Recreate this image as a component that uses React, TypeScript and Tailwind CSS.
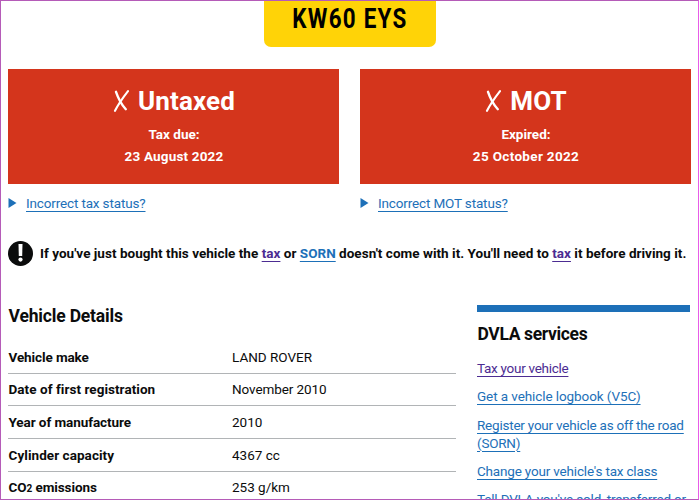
import type { ReactNode } from "react";

const details = [
  { label: "Vehicle make", value: "LAND ROVER", labelClass: "tracking-[-0.1px]", valueClass: "" },
  { label: "Date of first registration", value: "November 2010", labelClass: "tracking-[0.05px]", valueClass: "tracking-[-0.1px]" },
  { label: "Year of manufacture", value: "2010", labelClass: "tracking-[-0.08px]", valueClass: "" },
  { label: "Cylinder capacity", value: "4367 cc", labelClass: "tracking-[0.06px]", valueClass: "" },
  {
    // small figure sits on the baseline
    label: <>CO<span className="text-[10px]">2</span> emissions</>,
    value: "253 g/km",
    labelClass: "tracking-[-0.08px]",
    valueClass: "",
  },
];

const services = [
  { text: "Tax your vehicle", className: "text-[#4c2c92] tracking-[-0.28px]" },
  { text: "Get a vehicle logbook (V5C)", className: "text-[#1d70b8] tracking-[-0.09px]" },
  { text: "Register your vehicle as off the road (SORN)", className: "text-[#1d70b8] tracking-[-0.22px]" },
  { text: "Change your vehicle's tax class", className: "text-[#1d70b8] tracking-[-0.18px]" },
  { text: "Tell DVLA you've sold, transferred or bought a vehicle", className: "text-[#1d70b8] tracking-[-0.17px]" },
];

function Cross() {
  return (
    <svg width="16" height="22" viewBox="0 0 16 22" fill="none" stroke="#fff" strokeLinecap="round">
      <path d="M3 1.8 C4.6 6.5 8.5 14.5 12.8 19.2" strokeWidth="2.4" />
      <path d="M15 1.2 C10.5 7 5.5 14 2 20.8" strokeWidth="2.1" />
    </svg>
  );
}

type StatusProps = { title: ReactNode; label: string; date: ReactNode; link: string };

function StatusPanel({ title, label, date, link }: StatusProps) {
  return (
    <section className="w-[331px]">
      <div className="flex h-[115px] flex-col items-center bg-[#d4351c] pt-4 pl-px font-bold text-white">
        <h2 className="flex h-8 items-center gap-[9px] text-[26px] leading-8 tracking-[0.1px]">
          <Cross />
          {title}
        </h2>
        <p className="mt-[7px] text-center text-[13.5px] leading-[21.5px]">
          {label}
          <br />
          {date}
        </p>
      </div>
      <a className="mt-[10px] flex h-[18px] items-center text-[13.5px] leading-[18px] tracking-[-0.15px] text-[#1d70b8]">
        <svg width="9" height="10" viewBox="0 0 9 10" className="mr-[9px]">
          <path d="M0.5 0 L8.5 5 L0.5 10 Z" fill="#1d70b8" />
        </svg>
        <span className="underline decoration-1 underline-offset-[3px]">{link}</span>
      </a>
    </section>
  );
}

export default function App() {
  return (
    <div className="h-[500px] w-[699px] overflow-hidden border border-[#b55bb8] border-r-[#e85ce8] bg-white px-[7px] font-['Roboto','Liberation_Sans',sans-serif] text-[#0b0c0c]">
      <div className="mx-auto flex h-[46px] w-[172px] justify-center rounded-b-[7px] bg-[#ffd307]">
        <span className="origin-top scale-x-80 pt-[2px] pl-[2px] text-[28px] leading-8 font-bold tracking-[1.6px] whitespace-pre text-black">
          KW60 EYS
        </span>
      </div>

      <div className="mt-[22px] flex gap-[21px]">
        <StatusPanel
          title="Untaxed"
          label="Tax due:"
          date={<span className="tracking-[0.17px]">23 August 2022</span>}
          link="Incorrect tax status?"
        />
        <StatusPanel
          title="MOT"
          label="Expired:"
          date={<span className="tracking-[0.33px]">25 October 2022</span>}
          link="Incorrect MOT status?"
        />
      </div>

      <div className="mt-[28px] flex h-[26px] items-center">
        <span className="flex size-[25px] shrink-0 items-center justify-center rounded-full bg-[#0b0c0c]">
          <svg width="5" height="18" viewBox="0 0 5 18" fill="#fff">
            <path d="M0.5 0 H4.5 L4.2 12 H0.8 Z" />
            <circle cx="2.5" cy="15.6" r="2.1" />
          </svg>
        </span>
        <p className="ml-[7px] text-[13.5px] font-bold tracking-[0.025px] whitespace-nowrap">
          If you've just bought this vehicle the{" "}
          <a className="text-[#4c2c92] underline underline-offset-[3px]">tax</a> or{" "}
          <a className="text-[#1d70b8] underline underline-offset-[3px]">SORN</a> doesn't come with it. You'll need to{" "}
          <a className="text-[#4c2c92] underline underline-offset-[3px]">tax</a> it before driving it.
        </p>
      </div>

      <div className="mt-[39px] flex gap-[21px]">
        <section className="w-[448px] shrink-0">
          <h2 className="pl-[0.5px] text-[17.5px] leading-[22px] font-bold tracking-[-0.17px]">Vehicle Details</h2>
          <dl className="mt-[14px] text-[13.5px]">
            {details.map((d) => (
              <div key={d.value} className="flex h-[32.7px] items-center border-b border-[#b1b4b6]">
                <dt className="w-[224px] pl-[0.5px] font-bold">
                  <span className={d.labelClass}>{d.label}</span>
                </dt>
                <dd>
                  <span className={d.valueClass}>{d.value}</span>
                </dd>
              </div>
            ))}
          </dl>
        </section>

        <aside className="w-[213px] shrink-0 border-t-[7px] border-[#1d70b8]">
          <h2 className="mt-[11px] pl-[0.5px] text-[17.5px] leading-[22px] font-bold tracking-[-0.35px]">DVLA services</h2>
          <ul className="mt-[14px] flex flex-col gap-[10.3px] text-[13.5px] leading-[18px]">
            {services.map((s) => (
              <li key={s.text} className={s.className}>
                <a className="underline decoration-1 underline-offset-[3px]">{s.text}</a>
              </li>
            ))}
          </ul>
        </aside>
      </div>
    </div>
  );
}
